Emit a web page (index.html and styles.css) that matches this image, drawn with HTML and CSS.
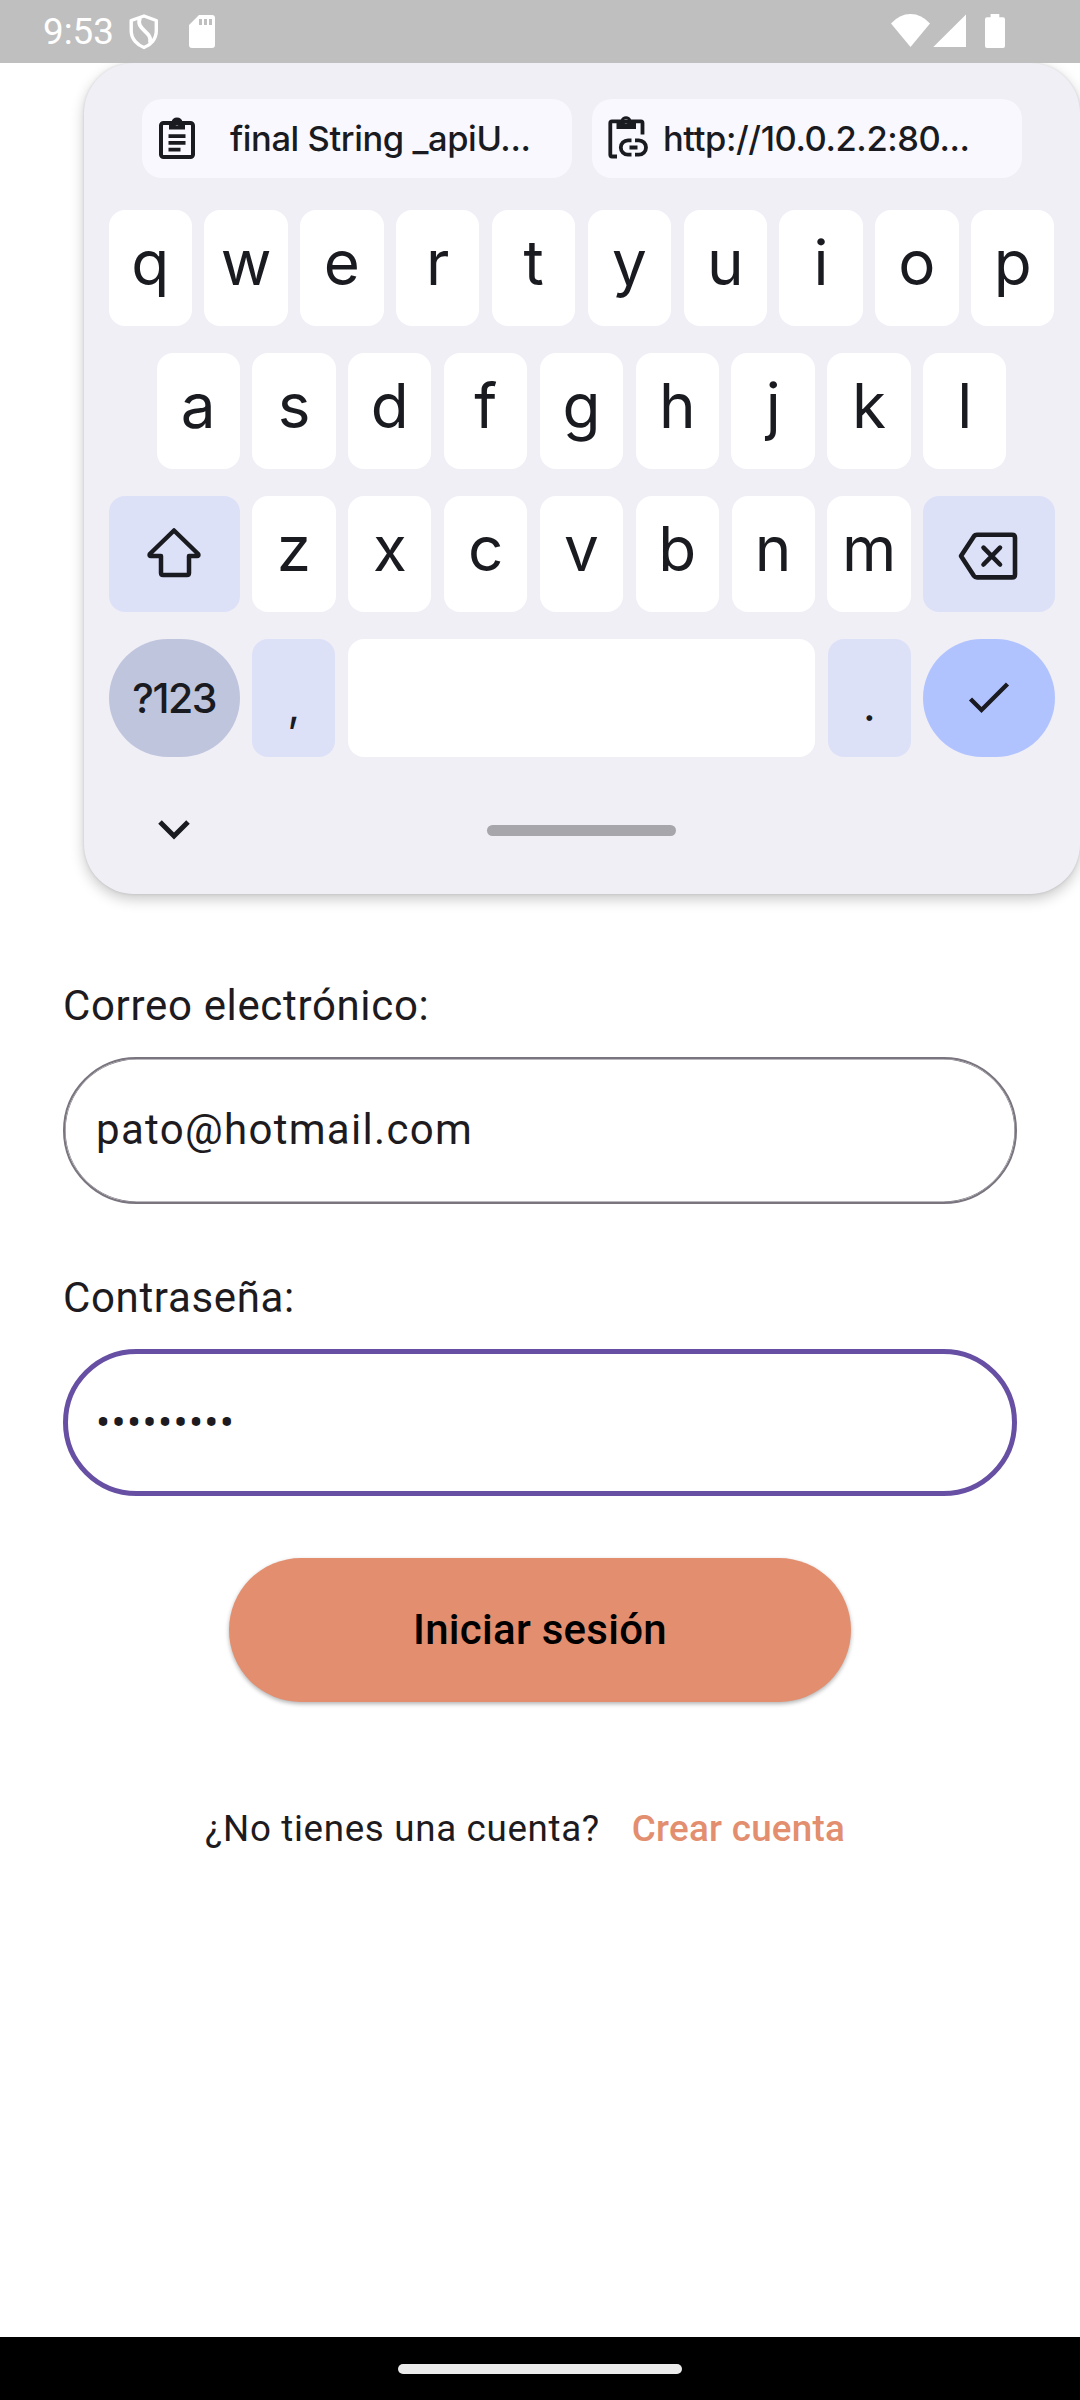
FILE: index.html
```html
<!DOCTYPE html>
<html lang="es">
<head>
<meta charset="utf-8">
<title>Iniciar sesión</title>
<link rel="stylesheet" href="styles.css">
</head>
<body>
<header class="status">
  <span class="clock">9:53</span>
  <svg class="shield" width="30" height="36" viewBox="0 0 30 36" fill="none" stroke="#fff"><path d="M15 2 L27.300 6.500 V17 C27.300 25 21.500 31 15 33.500 C8.500 31 2.200 25 2.200 17 V6.500 Z" stroke-width="3.400" stroke-linejoin="round"/><path d="M11 4 C6 16 24 17 21 29" stroke-width="3.800"/></svg>
  <svg class="sd" width="26" height="33" viewBox="0 0 26 33"><path fill="#fff" fill-rule="evenodd" d="M10 0 H23 Q26 0 26 3 V30 Q26 33 23 33 H3 Q0 33 0 30 V10 Z M10 4 V10 H13 V4 Z M15 4 V10 H18 V4 Z M20 4 V10 H23 V4 Z"/></svg>
  <svg class="system" width="116" height="36" viewBox="0 0 116 36" fill="#fff"><path d="M0 9.500 Q8.500 0 19.500 0 T39 9.500 L19.500 33 Z"/><path d="M42.300 33 H75 V0.500 Z"/><path d="M99.600 0 H108.300 V3.300 H112 Q114 3.300 114 5.500 V32 Q114 34 112 34 H96 Q94 34 94 32 V5.500 Q94 3.300 96 3.300 H99.600 Z"/></svg>
</header>
<main class="screen">
  <section class="keyboard">
    <div class="chips">
      <div class="chip">
        <svg width="36" height="42" viewBox="0 0 36 42"><rect x="2" y="6" width="32" height="34" rx="2.500" fill="none" stroke="#1a1b20" stroke-width="4"/><path fill="#1a1b20" fill-rule="evenodd" d="M10 5 H12.500 A5.600 5.600 0 0 1 23.500 5 H26 V12.500 H10 Z M18 4 A2.300 2.300 0 1 0 18 8.600 A2.300 2.300 0 1 0 18 4 Z M9.500 17.300 H26.500 V21 H9.500 Z M9.500 24 H26.500 V27.700 H9.500 Z M9.500 30.700 H21.500 V34.400 H9.500 Z"/></svg>
        <span class="chip-text first">final String _apiU...</span>
      </div>
      <div class="chip linked">
        <svg width="40" height="44" viewBox="0 0 40 44" fill="none" stroke="#1a1b20" stroke-width="3.800"><path d="M9 41.500 H4 Q2.300 41.500 2.300 39.800 V8 Q2.300 6.300 4 6.300 H33 Q34.500 6.300 34.500 8 V19.500"/><path fill="#1a1b20" stroke="none" fill-rule="evenodd" d="M8.500 5 H12.800 A5.500 5.500 0 0 1 23.200 5 H28 V14 H8.500 Z M18 4 A2.300 2.300 0 1 0 18 8.600 A2.300 2.300 0 1 0 18 4 Z"/><path d="M23.500 25.300 H20 A7.200 7.200 0 0 0 20 39.700 H23.500 M27 25.300 H30.800 A7.200 7.200 0 0 1 30.800 39.700 H27 M21.500 32.500 H29.500"/></svg>
        <span class="chip-text">http://10.0.2.2:80...</span>
      </div>
    </div>
    <div class="keys">
      <div class="row"><span class="key">q</span><span class="key">w</span><span class="key">e</span><span class="key">r</span><span class="key">t</span><span class="key">y</span><span class="key">u</span><span class="key">i</span><span class="key">o</span><span class="key">p</span></div>
      <div class="row inset"><span class="key">a</span><span class="key">s</span><span class="key">d</span><span class="key">f</span><span class="key">g</span><span class="key">h</span><span class="key">j</span><span class="key">k</span><span class="key">l</span></div>
      <div class="row">
        <span class="key side tint"><svg class="shift" width="54" height="52" viewBox="0 0 54 52" fill="none" stroke="#1a1b20" stroke-width="4.500" stroke-linejoin="round"><path d="M27 3.500 L2.800 27 Q2 29 4 29 H14 V46 Q14 48 16 48 H40 Q42 48 42 46 V29 H50 Q52 29 51.200 27 Z"/></svg></span>
        <span class="key">z</span><span class="key">x</span><span class="key">c</span><span class="key">v</span><span class="key">b</span><span class="key">n</span><span class="key">m</span>
        <span class="key side tint"><svg class="erase" width="60" height="48" viewBox="0 0 60 48" fill="none" stroke="#1a1b20" stroke-width="4.600" stroke-linejoin="round"><path d="M19 2.800 H54 Q57 2.800 57 5.800 V42.400 Q57 45.400 54 45.400 H19 Q17 45.400 16 44 L3 24.100 L16 4.200 Q17 2.800 19 2.800 Z"/><path d="M25.500 15.700 L42 32.500 M42 15.700 L25.500 32.500" stroke-linecap="round"/></svg></span>
      </div>
      <div class="row last">
        <span class="key side round symbols">?123</span>
        <span class="key tint punct">,</span>
        <span class="key space"></span>
        <span class="key tint punct">.</span>
        <span class="key side round enter"><svg width="42" height="32" viewBox="0 0 42 32" fill="none" stroke="#1a1b20" stroke-width="4.400"><path d="M2.500 17 L13.500 28 L39.500 2"/></svg></span>
      </div>
    </div>
    <div class="handle-row">
      <svg width="32" height="20" viewBox="0 0 32 20" fill="none" stroke="#1a1b20" stroke-width="5"><path d="M2 2 L16 16 L30 2"/></svg>
      <span class="handle"></span>
    </div>
  </section>
  <form class="login">
    <label class="label">Correo electrónico:</label>
    <div class="field">pato@hotmail.com</div>
    <label class="label">Contraseña:</label>
    <div class="field focused">•••••••••</div>
    <div class="submit">Iniciar sesión</div>
    <p class="signup"><span>¿No tienes una cuenta?</span><a class="create">Crear cuenta</a></p>
  </form>
</main>
<footer class="nav"><span class="pill"></span></footer>
</body>
</html>
```
FILE: styles.css
```css
* { box-sizing: border-box; }
body {
  margin: 0;
  width: 1080px;
  height: 2400px;
  display: flex;
  flex-direction: column;
  background: #fff;
  color: #1d1b20;
  font-family: Roboto, sans-serif;
  overflow: hidden;
}
svg { display: block; flex: none; }

.status {
  height: 63px;
  flex: none;
  background: #bfbfbf;
  color: #fff;
  display: flex;
  align-items: flex-start;
  padding: 0 73px 0 43px;
  position: relative;
  z-index: 1;
}
.clock { width: 86px; font-size: 36.750px; line-height: 63px; }
.shield { margin-top: 13.500px; }
.sd { margin: 15px 0 0 30px; }
.system { margin: 14px 0 0 auto; }

.screen { flex: 1; min-height: 0; }

.keyboard {
  margin-left: 84px;
  height: 831px;
  padding: 36px 25.500px 0 24.500px;
  border-radius: 50px;
  background: #f0eff6;
  box-shadow: 0 5px 14px rgba(0, 0, 0, .22), 0 0 3px rgba(0, 0, 0, .12);
  color: #1a1b20;
  font-family: Inter, sans-serif;
}
.chips { display: flex; gap: 20.500px; padding-left: 33.500px; }
.chip {
  width: 429.500px;
  height: 78.500px;
  border-radius: 20px;
  background: #f9f8ff;
  display: flex;
  align-items: center;
  padding-left: 17px;
}
.chip-text { margin-left: 15px; font-size: 34.500px; font-weight: 500; letter-spacing: -.420px; white-space: pre; }
.chip-text.first { margin-left: 35px; }
.linked { padding-left: 16px; }
.linked svg { margin-top: -3px; }

.keys { display: flex; flex-direction: column; gap: 27.200px; margin-top: 32.800px; }
.row { display: flex; gap: 12.500px; height: 115.800px; }
.row.inset { padding: 0 48px; }
.row.last { height: 118px; }
.key {
  flex: 1 1 0;
  border-radius: 16px;
  background: #fff;
  font-size: 62px;
  line-height: 105px;
  text-align: center;
}
.tint { background: #dde1f8; }
.side { flex: 0 0 131.300px; display: flex; justify-content: center; }
.shift { margin: 31px 1px 0 0; }
.erase { margin: 36px 1px 0 0; }
.round { border-radius: 59px; align-items: center; }
.symbols { background: #c0c5de; font-size: 41px; font-weight: 500; letter-spacing: -1.500px; }
.enter { background: #b1c3ff; }
.space { flex: 0 0 467.500px; }
.punct { font-size: 44px; line-height: 132px; }

.handle-row { display: flex; align-items: center; padding-left: 49px; margin-top: 63px; }
.handle { width: 189px; height: 11px; margin-left: 297.500px; border-radius: 6px; background: #a7a6ab; }

.login { padding: 87px 63px 0; }
.label { display: block; font-size: 42px; line-height: 50px; letter-spacing: .660px; }
.field {
  height: 147px;
  margin: 26px 0 69px;
  padding-left: 31px;
  border: 2px solid #79747e;
  border-radius: 73.500px;
  box-shadow: inset 0 0 0 .6px #79747e;
  font-size: 42px;
  line-height: 142px;
  letter-spacing: 1.310px;
}
.focused {
  padding-left: 28px;
  border: 5px solid #6750a4;
  box-shadow: none;
  margin-bottom: 62px;
  line-height: 137px;
}
.submit {
  width: 622px;
  height: 144px;
  margin: 0 auto;
  border-radius: 72px;
  background: #e28e6f;
  box-shadow: 0 2px 4px rgba(0, 0, 0, .3);
  color: #000;
  font-size: 42px;
  font-weight: 500;
  line-height: 144px;
  letter-spacing: .260px;
  text-align: center;
}
.signup { display: flex; gap: 32px; margin: 105px 0 0 142px; font-size: 36.750px; line-height: 44px; letter-spacing: .660px; }
.create { color: #e28e6f; font-weight: 500; letter-spacing: .260px; }

.nav { height: 63px; flex: none; background: #000; display: flex; align-items: center; justify-content: center; padding-top: 1px; }
.pill { width: 284px; height: 10px; border-radius: 5px; background: #ebebeb; }
```
